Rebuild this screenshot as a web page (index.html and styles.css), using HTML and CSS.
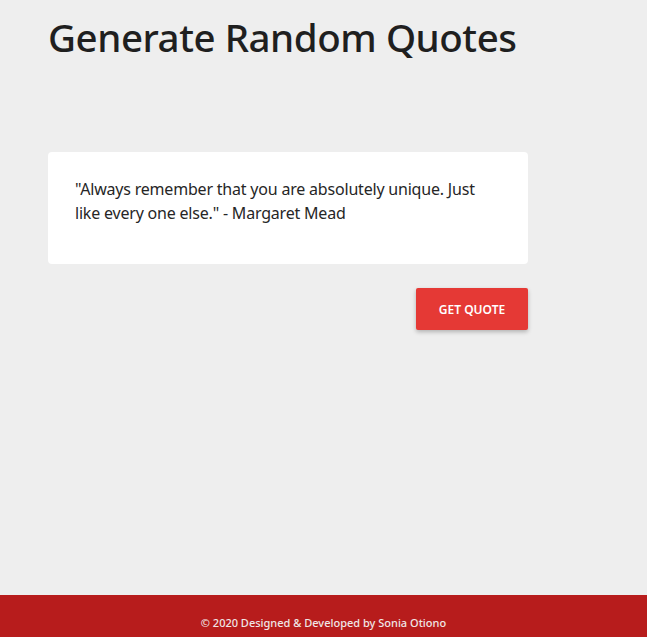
FILE: index.html
```html
<!DOCTYPE html>
<html lang="en">
<head>
<meta charset="utf-8">
<title>Generate Random Quotes</title>
<link rel="stylesheet" href="styles.css">
</head>
<body>
<main class="main">
  <h1 class="title">Generate Random Quotes</h1>
  <div class="card">
    <p class="quote">"Always remember that you are absolutely unique. Just like every one else." - Margaret Mead</p>
  </div>
  <div class="actions">
    <button class="btn">GET QUOTE</button>
  </div>
</main>
<footer class="footer">© 2020 Designed &amp; Developed by Sonia Otiono</footer>
</body>
</html>
```

FILE: styles.css
```css
* { box-sizing: border-box; }
html, body { margin: 0; padding: 0; }
body {
  background: #eeeeee;
  font-family: "Noto Sans", "Open Sans", sans-serif;
  color: #212529;
  min-height: 100vh;
  display: flex;
  flex-direction: column;
}
.main {
  padding: 15px 0 0 48px;
}
.title {
  margin: 0;
  font-size: 38.5px;
  font-weight: 500;
  line-height: 44px;
  letter-spacing: -0.45px;
  white-space: nowrap;
  color: #1f1f1f;
}
.card {
  width: 480px;
  margin-top: 93px;
  background: #fff;
  border-radius: 4px;
  padding: 25px 40px 23px 27px;
}
.quote {
  margin: 0 0 16px;
  font-size: 16px;
  line-height: 24px;
  letter-spacing: -0.2px;
  color: #262626;
}
.actions {
  width: 480px;
  display: flex;
  justify-content: flex-end;
  margin-top: 24px;
}
.btn {
  width: 112px;
  height: 42px;
  border: none;
  border-radius: 2px;
  background: #e53935;
  color: #fff;
  font-family: inherit;
  font-size: 12px;
  font-weight: 600;
  box-shadow: 0 2px 4px rgba(0,0,0,0.25);
}
.footer {
  margin-top: auto;
  height: 42px;
  background: #b71c1c;
  color: #f0e6e6;
  font-size: 11px;
  font-weight: 500;
  text-align: center;
  padding-top: 20px;
  line-height: 16px;
}
```
